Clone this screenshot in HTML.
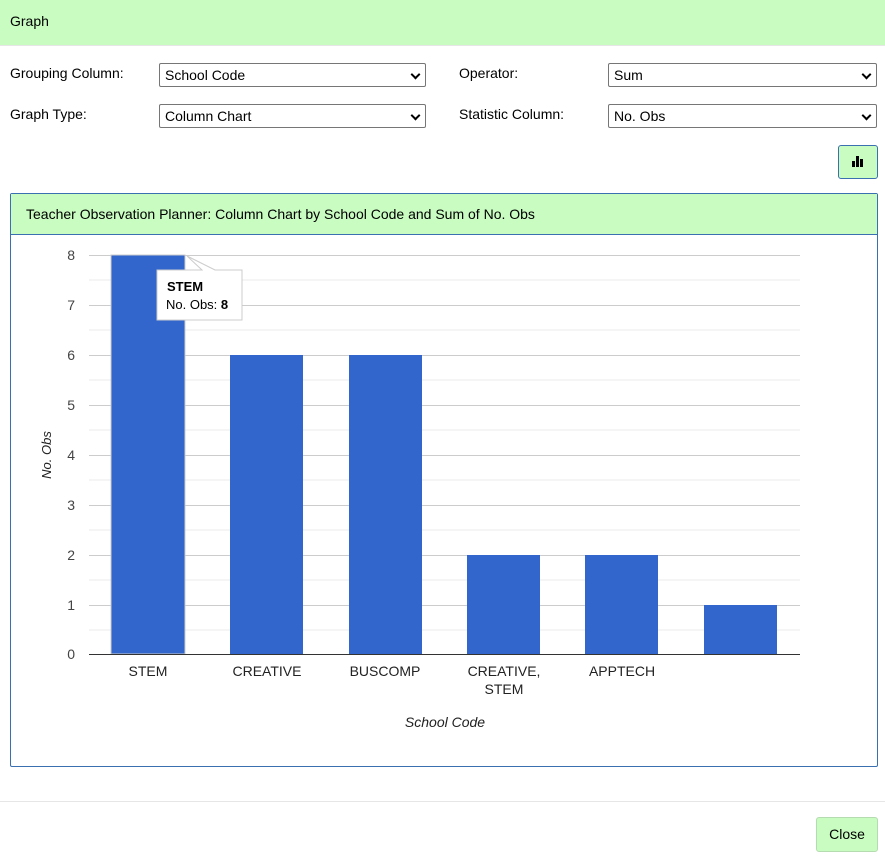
<!DOCTYPE html>
<html><head><style>
body{margin:0;width:885px;height:861px;background:#fff;font-family:"Liberation Sans",sans-serif;font-size:14px;color:#000;position:relative;overflow:hidden}
.abs{position:absolute}
.top{left:0;top:0;width:885px;height:45px;background:#c8fcc0;border-bottom:1px solid #e6e6e6}
.sel{position:absolute;width:267px;height:24px;border:1px solid #767676;border-radius:2px;background:#fff;box-sizing:border-box;font-size:14px;line-height:22px;padding-left:5px}
.sel:after{content:"";position:absolute;right:6px;top:7px;width:5px;height:5px;border-right:2px solid #000;border-bottom:2px solid #000;transform:rotate(45deg)}
</style></head><body>
<div class="abs top"><span class="abs" style="left:10px;top:13px">Graph</span></div>
<span class="abs" style="left:10px;top:65px">Grouping Column:</span>
<div class="sel" style="left:159px;top:63px">School Code</div>
<span class="abs" style="left:459px;top:65px">Operator:</span>
<div class="sel" style="left:608px;top:63px;width:269px">Sum</div>
<span class="abs" style="left:10px;top:106px">Graph Type:</span>
<div class="sel" style="left:159px;top:104px">Column Chart</div>
<span class="abs" style="left:459px;top:106px">Statistic Column:</span>
<div class="sel" style="left:608px;top:104px;width:269px">No. Obs</div>
<div class="abs" style="left:838px;top:145px;width:38px;height:32px;background:#c8fcc0;border:1px solid #3a6fb0;border-radius:3px">
<svg width="38" height="32"><rect x="13" y="15" width="3" height="6"/><rect x="17" y="10" width="3" height="11"/><rect x="21" y="13" width="3" height="8"/></svg></div>
<div class="abs" style="left:10px;top:193px;width:866px;height:572px;border:1px solid #3a6fb0;border-radius:2px">
<div style="height:40px;background:#c8fcc0;border-bottom:1px solid #3a6fb0;line-height:40px;padding-left:15px">Teacher Observation Planner: Column Chart by School Code and Sum of No. Obs</div></div>
<svg class="abs" style="left:0;top:0" width="885" height="800" font-family="Liberation Sans, sans-serif" font-size="14" fill="#444">
<g stroke="#ebebeb"><line x1="89" x2="800" y1="280" y2="280"/><line x1="89" x2="800" y1="330" y2="330"/><line x1="89" x2="800" y1="380" y2="380"/><line x1="89" x2="800" y1="430" y2="430"/><line x1="89" x2="800" y1="480" y2="480"/><line x1="89" x2="800" y1="530" y2="530"/><line x1="89" x2="800" y1="580" y2="580"/><line x1="89" x2="800" y1="630" y2="630"/></g>
<g stroke="#ccc"><line x1="89" x2="800" y1="255.5" y2="255.5"/><line x1="89" x2="800" y1="305.5" y2="305.5"/><line x1="89" x2="800" y1="355.5" y2="355.5"/><line x1="89" x2="800" y1="405.5" y2="405.5"/><line x1="89" x2="800" y1="455.5" y2="455.5"/><line x1="89" x2="800" y1="505.5" y2="505.5"/><line x1="89" x2="800" y1="555.5" y2="555.5"/><line x1="89" x2="800" y1="605.5" y2="605.5"/></g>
<g fill="#3366cc"><rect x="111" y="255" width="74" height="399" stroke="#ccc" stroke-width="1"/><rect x="230" y="355" width="73" height="299"/><rect x="349" y="355" width="73" height="299"/><rect x="467" y="555" width="73" height="99"/><rect x="585" y="555" width="73" height="99"/><rect x="704" y="605" width="73" height="49"/></g>
<line x1="89" x2="800" y1="654.5" y2="654.5" stroke="#333"/>
<g text-anchor="end"><text x="75" y="260">8</text><text x="75" y="310">7</text><text x="75" y="360">6</text><text x="75" y="410">5</text><text x="75" y="460">4</text><text x="75" y="510">3</text><text x="75" y="560">2</text><text x="75" y="610">1</text><text x="75" y="659">0</text></g>
<g text-anchor="middle" fill="#222"><text x="148" y="676">STEM</text><text x="267" y="676">CREATIVE</text><text x="385" y="676">BUSCOMP</text><text x="504" y="676">CREATIVE,</text><text x="504" y="694">STEM</text><text x="622" y="676">APPTECH</text></g>
<text x="445" y="727" text-anchor="middle" font-style="italic" fill="#222">School Code</text>
<text transform="translate(51,455) rotate(-90)" text-anchor="middle" font-style="italic" fill="#222" font-size="13">No. Obs</text>
<path d="M157 270 H202 L187 256 L215 270 H242 V320 H157 Z" fill="#fff" stroke="#ccc"/>
<text x="167" y="291" font-weight="bold" fill="#000" font-size="13">STEM</text>
<text x="166" y="309" fill="#000" font-size="13">No. Obs: <tspan font-weight="bold">8</tspan></text>
</svg>
<div class="abs" style="left:0;top:801px;width:885px;border-top:1px solid #e6e6e6"></div>
<div class="abs" style="left:816px;top:817px;width:60px;height:33px;background:#c8fcc0;border:1px solid #b5dcb0;border-radius:3px;line-height:33px;text-align:center">Close</div>
</body></html>
